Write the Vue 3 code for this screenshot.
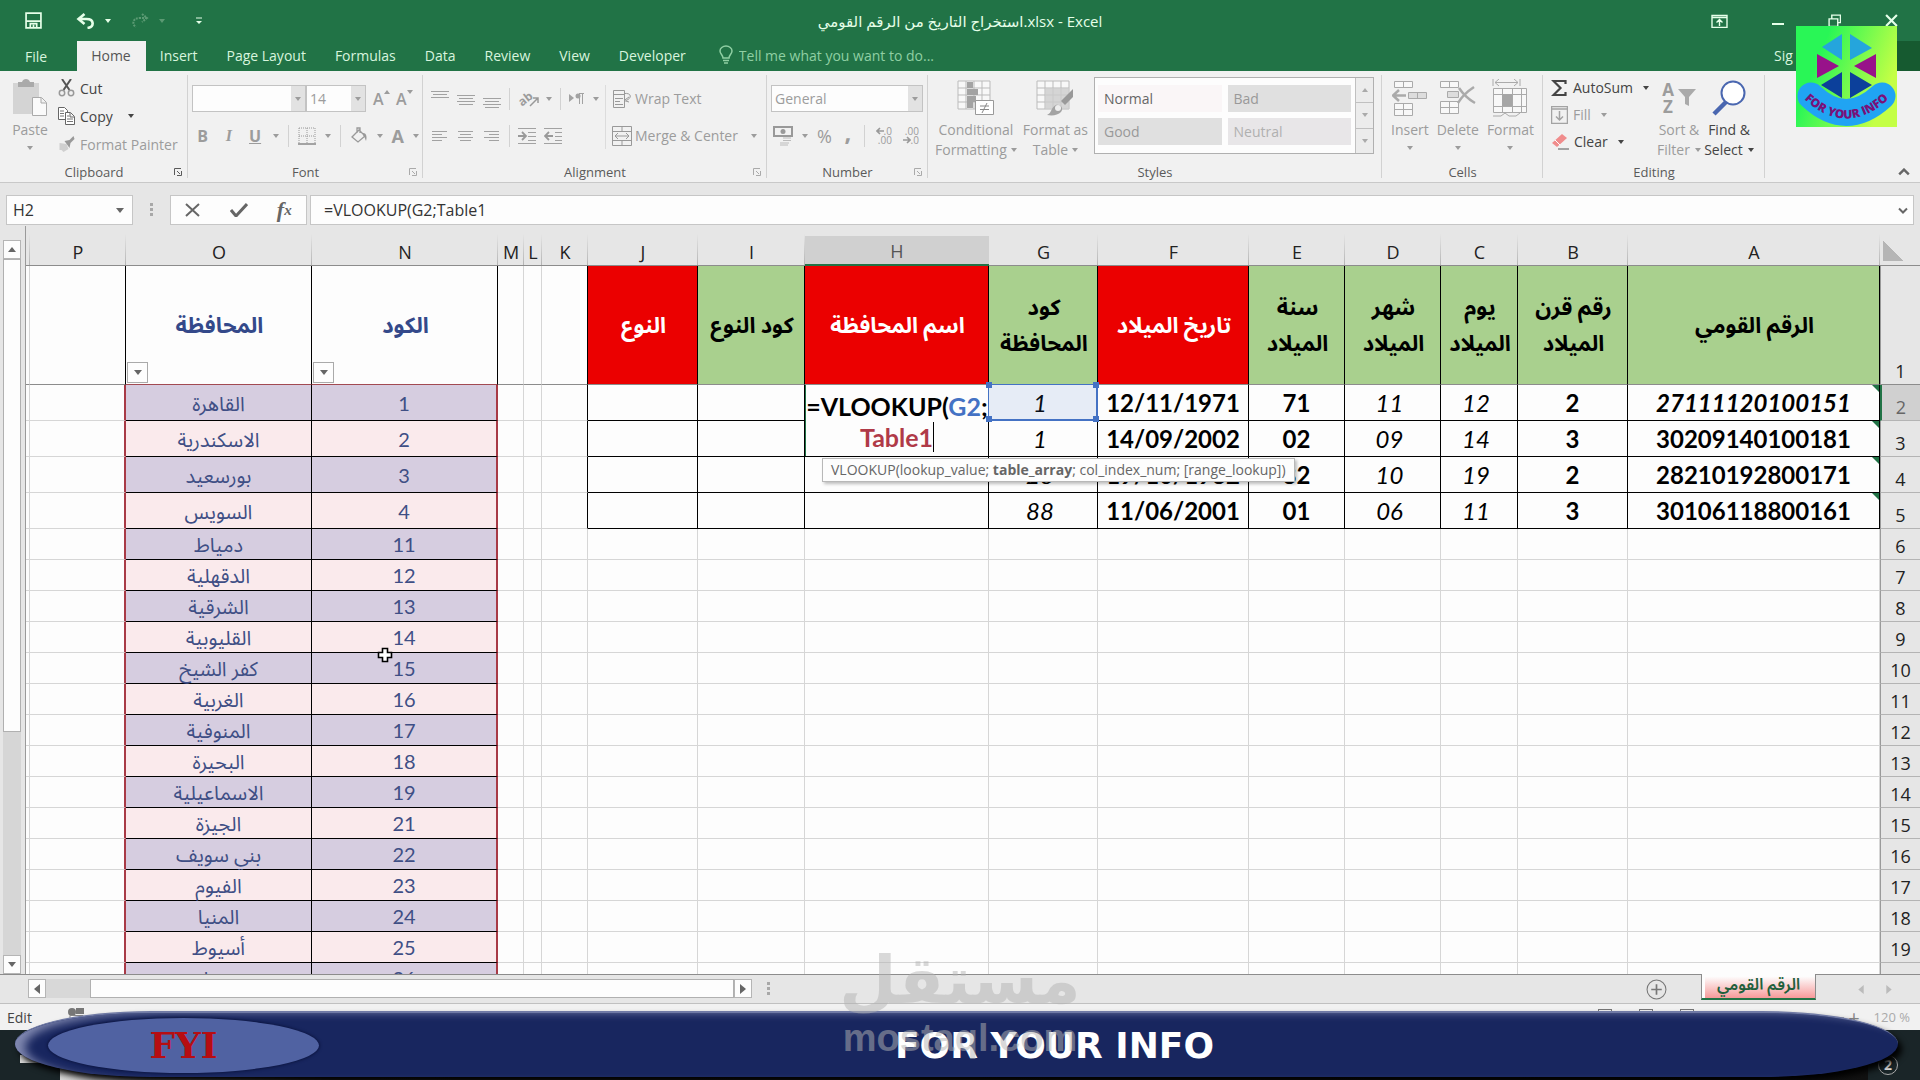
<template>
  <div class="excel">
    <!-- icon set -->
    <svg class="symbols" aria-hidden="true">
      <symbol id="save" viewBox="0 0 16 16"><path d="M1 1h14v14H1zM1 8.500h14M5 15v-4h6v4M8 12v3" fill="none" stroke="currentColor" stroke-width="1.600" /></symbol>
      <symbol id="undo" viewBox="0 0 18 16"><path d="M8 1L2 6l6 5M2 6h8c8 0 8 8 1 9" fill="none" stroke="currentColor" stroke-width="2.600" /></symbol>
      <symbol id="redo" viewBox="0 0 18 16"><path d="M11 1l5 4-5 4M16 5H9C1 5 1 12 5 14" fill="none" stroke="currentColor" stroke-width="2" stroke-dasharray="2 1" /></symbol>
      <symbol id="customize" viewBox="0 0 8 8"><path d="M1 1h6" stroke="currentColor" /><path d="M1 4h6L4 7z" fill="currentColor" /></symbol>
      <symbol id="display" viewBox="0 0 16 14"><path d="M.5 1.500h15v12H.5zM.5 3.500h15M8 12V6M5 8.500l3-3 3 3" fill="none" stroke="currentColor" stroke-width="1.400" /></symbol>
      <symbol id="minimize" viewBox="0 0 12 12"><path d="M0 9h12" stroke="currentColor" stroke-width="2" /></symbol>
      <symbol id="restore" viewBox="0 0 12 12"><path d="M1 4.500h8v7H1zM3.500 4V1h8v7H9" fill="none" stroke="currentColor" stroke-width="1.300" /></symbol>
      <symbol id="close" viewBox="0 0 12 12"><path d="M1 1l10 10M11 1L1 11" stroke="currentColor" stroke-width="2" /></symbol>
      <symbol id="bulb" viewBox="0 0 14 20"><path d="M4 13C4 10 1 9 1 6a6 5 0 0 1 12 0c0 3-3 4-3 7zM4 15.500h6M5 18h4" fill="none" stroke="currentColor" stroke-width="1.500" /></symbol>
      <symbol id="paste" viewBox="0 0 36 38"><path d="M1 4h26v31H1z" fill="#d4d4d4" /><path d="M6 8V3h4c1-4 7-4 8 0h4v5z" fill="#aaa" /><path d="M20.500 18.500h9l5 5v13h-14zM29 19v5h5" fill="#fafafa" stroke="#aaa" /></symbol>
      <symbol id="cut" viewBox="0 0 16 18"><path d="M3.500 0L11 11M12.500 0L5 11" stroke="#555" stroke-width="2" /><circle cx="3.500" cy="14" r="2.700" fill="none" stroke="#999" stroke-width="1.500" /><circle cx="12.500" cy="14" r="2.700" fill="none" stroke="#999" stroke-width="1.500" /></symbol>
      <symbol id="copy" viewBox="0 0 17 18"><path d="M.5 .5h6l3 3v9h-9z" fill="#fff" stroke="#666" /><path d="M7.500 5.500h5l4 4v8h-9zM12 6v4h4" fill="#fff" stroke="#666" /><path d="M2 4h4M2 6.500h4M2 9h4M9 9h2M9 12h6M9 14.500h6" stroke="#777" /></symbol>
      <symbol id="painter" viewBox="0 0 16 16"><path d="M1 7l7 1 2 5-5 3-2-2H1z" fill="#cfcfcf" /><path d="M6 5l5-1 4-4 1 3-4 4-1 5z" fill="#999" /></symbol>
      <symbol id="launcher" viewBox="0 0 8 8"><path d="M.5 7V.5H7M3 3l3 3M7.500 3v4.500H3" fill="none" stroke="currentColor" /></symbol>
      <symbol id="borders" viewBox="0 0 18 18"><path d="M1 1h16M1 1v15M17 1v15M9 1v15M1 9h16" fill="none" stroke="#999" stroke-dasharray="1 1" /><path d="M0 17h18" stroke="#888" stroke-width="1.500" /></symbol>
      <symbol id="bucket" viewBox="0 0 18 18"><path d="M2 10l7-7 6 6-7 6zM7 6V1h3v5" fill="none" stroke="#999" stroke-width="1.300" /><path d="M13 6c4 0 4 5 3 8-1-2-1-4-3-6z" fill="#999" /></symbol>
      <symbol id="al-top" viewBox="0 0 18 18"><path d="M0 1.500h18M2 4.500h14M0 7.500h18" stroke="#a2a2a2" /></symbol>
      <symbol id="al-mid" viewBox="0 0 18 18"><path d="M0 5.500h18M2 8.500h14M0 11.500h18M2 14.500h14" stroke="#a2a2a2" /></symbol>
      <symbol id="al-bot" viewBox="0 0 18 18"><path d="M0 8.500h18M2 11.500h14M0 14.500h18M2 17.500h14" stroke="#a2a2a2" /></symbol>
      <symbol id="al-left" viewBox="0 0 18 18"><path d="M1 4.500h15M1 7.500h10M1 10.500h15M1 13.500h10" stroke="#a2a2a2" /></symbol>
      <symbol id="al-center" viewBox="0 0 18 18"><path d="M1 4.500h15M3 7.500h11M1 10.500h15M3 13.500h11" stroke="#a2a2a2" /></symbol>
      <symbol id="al-right" viewBox="0 0 18 18"><path d="M1 4.500h15M6 7.500h10M1 10.500h15M6 13.500h10" stroke="#a2a2a2" /></symbol>
      <symbol id="indent-in" viewBox="0 0 18 18"><path d="M0 1.500h18M10 5.500h8M10 9.500h8M10 13.500h8M0 16.500h18" stroke="#a2a2a2" /><path d="M0 9h7M4 5l4 4-4 4" fill="none" stroke="#999" stroke-width="1.800" /></symbol>
      <symbol id="indent-out" viewBox="0 0 18 18"><path d="M0 1.500h18M11 5.500h7M11 9.500h7M11 13.500h7M0 16.500h18" stroke="#a2a2a2" /><path d="M9 9H1M5 5L1 9l4 4" fill="none" stroke="#999" stroke-width="1.800" /></symbol>
      <symbol id="rtl" viewBox="0 0 16 14"><path d="M0 2l5 4-5 4z" fill="#a2a2a2" /><path d="M15 1.500h-5M10.500 1v11M13.500 1v11" stroke="#a2a2a2" /><circle cx="9" cy="4" r="2.500" fill="#a2a2a2" /></symbol>
      <symbol id="wrap" viewBox="0 0 20 20"><path d="M1.500 1.500h11v17h-11zM1.500 5.500h11M3 9.500h8M3 12.500h5M3 15.500h8M12 4.500c8-1 8 5 2 7M17 8l-5 3.500 5 1.500" fill="none" stroke="#999" /></symbol>
      <symbol id="merge" viewBox="0 0 20 20"><path d="M.5 .5h19v19H.5zM.5 5.500h19M.5 14.500h19M10 .5v5M10 14.500v5M3 10h14M6 7l-3 3 3 3M14 7l3 3-3 3" fill="none" stroke="#999" /></symbol>
      <symbol id="money" viewBox="0 0 20 20"><path d="M1 1h18v9H1z" fill="none" stroke="#999" stroke-width="2" /><circle cx="10" cy="5.500" r="2.500" fill="#999" /><path d="M10 12h8M10 14.500h8M7 17h9M7 19h8" stroke="#bbb" /></symbol>
      <symbol id="arrow-l" viewBox="0 0 8 8"><path d="M8 4H1M4 1L1 4l3 3" fill="none" stroke="#999" stroke-width="1.600" /></symbol>
      <symbol id="arrow-r" viewBox="0 0 8 8"><path d="M0 4h7M4 1l3 3-3 3" fill="none" stroke="#999" stroke-width="1.600" /></symbol>
      <symbol id="cond" viewBox="0 0 38 36"><path d="M1 1h32v28H1zM1 8h32M1 15h32M1 22h32M9 1v28M17 1v28M25 1v28" fill="#f8f8f8" stroke="#bbb" /><path d="M10 2h6v6h-6zM10 9h11v6H10zM10 16h9v6h-9zM10 22h6v6h-6z" fill="#a3a3a3" /><path d="M18.500 20.500h18v14h-18z" fill="#fff" stroke="#999" /><path d="M23 26h9M23 29.500h9M30 23l-5 10" stroke="#888" /></symbol>
      <symbol id="fmt-table" viewBox="0 0 38 36"><path d="M1 1h32v28H1zM1 8h32M1 15h32M1 22h32M9 1v28M17 1v28M25 1v28" fill="#f8f8f8" stroke="#bbb" /><path d="M9 8h24v21H9z" fill="#ccc" opacity=".8" /><path d="M37 9v8l-8 8-4-4z" fill="#999" /><path d="M11 35c5-2 4-8 9-10 5-1 8 4 5 7-3 3-8 4-14 3z" fill="#a3a3a3" /><circle cx="22" cy="28" r="3" fill="#eee" /></symbol>
      <symbol id="ins" viewBox="0 0 36 36"><path d="M2.500 1.500h18v6h-18zM11.500 1.500v6M2.500 23.500h18v12h-18zM2.500 29.500h18M11.500 23.500v12" fill="#f8f8f8" stroke="#aaa" /><path d="M16.500 12.500h18v6h-18zM25.500 12.500v6" fill="#ddd" stroke="#aaa" /><path d="M14 15.500H2M7 10l-6 5.500 6 5.500" fill="none" stroke="#aaa" stroke-width="2.500" /></symbol>
      <symbol id="del" viewBox="0 0 36 36"><path d="M.5 1.500h18v6H.5zM9.500 1.500v6M.5 21.500h18v12H.5zM.5 27.500h18M9.500 21.500v12" fill="#f8f8f8" stroke="#aaa" /><path d="M7.500 11.500h11v6h-11z" fill="#ddd" stroke="#aaa" /><path d="M19 8c4 6 9 11 16 15M34 7c-6 4-12 9-16 16" fill="none" stroke="#aaa" stroke-width="2.500" /></symbol>
      <symbol id="fmt" viewBox="0 0 36 38"><path d="M1 0v7M28 0v7M3 3.500h23M7 0L3 3.500 7 7M22 0l4 3.500L22 7" fill="none" stroke="#aaa" /><path d="M1.500 9.500h33v24h-33zM1.500 15.500h33M1.500 27.500h33M10.500 9.500v24M20.500 9.500v24M29.500 9.500v24" fill="#f8f8f8" stroke="#aaa" /><path d="M10 15h10v12H10z" fill="#a6a6a6" /><path d="M1 37h8l4-3 4 3h7l4-3" fill="none" stroke="#aaa" /></symbol>
      <symbol id="sigma" viewBox="0 0 16 18"><path d="M14 5V2H2l7 7-7 7h12v-3" fill="none" stroke="#444" stroke-width="2.200" /></symbol>
      <symbol id="fill" viewBox="0 0 17 18"><path d="M.5 .5h16v17H.5zM.5 3h16M8.500 5v9M5 10.500l3.500 3.500 3.500-3.500" fill="none" stroke="#a3a3a3" stroke-width="1.500" /></symbol>
      <symbol id="eraser" viewBox="0 0 18 17"><path d="M1 10L11 1l5 4L6 14z" fill="#f08c8c" /><path d="M4 7l5 5" stroke="#fff" /><path d="M7 16h11" stroke="#555" /></symbol>
      <symbol id="funnel" viewBox="0 0 18 18"><path d="M0 0h18l-7 8v9l-4-2V8z" fill="#aaa" /></symbol>
      <symbol id="find" viewBox="0 0 34 36"><path d="M14 22L2 34" stroke="#4a67b0" stroke-width="4.500" /><circle cx="21" cy="13" r="11.500" fill="#fff" stroke="#4a67b0" stroke-width="2" /></symbol>
      <symbol id="up" viewBox="0 0 10 6"><path d="M1 5l4-4 4 4" fill="none" stroke="#666" stroke-width="2" /></symbol>
      <symbol id="down" viewBox="0 0 10 6"><path d="M1 1l4 4 4-4" fill="none" stroke="#666" stroke-width="2" /></symbol>
      <symbol id="check" viewBox="0 0 18 14"><path d="M1 7l5 6L17 1" fill="none" stroke="#666" stroke-width="3" /></symbol>
      <symbol id="cancel" viewBox="0 0 16 14"><path d="M1 1l13 12M14 1L1 13" stroke="#666" stroke-width="2" /></symbol>
      <symbol id="plus" viewBox="0 0 20 20"><circle cx="10" cy="10" r="9" fill="none" stroke="#777" /><path d="M10 5v10M5 10h10" stroke="#777" stroke-width="1.600" /></symbol>
      <symbol id="tri-left" viewBox="0 0 6 10"><path d="M6 0v10L0 5z" fill="currentColor" /></symbol>
      <symbol id="tri-right" viewBox="0 0 6 10"><path d="M0 0v10l6-5z" fill="currentColor" /></symbol>
    </svg>

    <header class="titlebar">
      <div class="quick">
        <button aria-label="Save"><svg width="17" height="17"><use href="#save" /></svg></button>
        <button aria-label="Undo"><svg width="19" height="16"><use href="#undo" /></svg><i class="caret"></i></button>
        <button class="dim" aria-label="Redo"><svg width="18" height="16"><use href="#redo" /></svg><i class="caret"></i></button>
        <button aria-label="Customize"><svg width="8" height="8"><use href="#customize" /></svg></button>
      </div>
      <h1>استخراج التاريخ من الرقم القومي.xlsx - Excel</h1>
      <div class="window-buttons">
        <button aria-label="Ribbon display"><svg width="17" height="14"><use href="#display" /></svg></button>
        <button aria-label="Minimize"><svg width="12" height="12"><use href="#minimize" /></svg></button>
        <button aria-label="Restore"><svg width="13" height="13"><use href="#restore" /></svg></button>
        <button aria-label="Close"><svg width="13" height="13"><use href="#close" /></svg></button>
      </div>
    </header>

    <nav class="tabs">
      <button class="tab file">File</button>
      <button v-for="tab in tabs" :key="tab" :class="['tab', { active: tab === activeTab }]" @click="activeTab = tab">{{ tab }}</button>
      <label class="tell"><svg width="14" height="20"><use href="#bulb" /></svg><input type="text" placeholder="Tell me what you want to do..." aria-label="Tell me" /></label>
      <button class="signin">Sig</button>
      <span class="share"></span>
    </nav>

    <section class="ribbon">
      <div class="group">
        <div class="body clipboard">
          <button class="big off"><svg width="36" height="38"><use href="#paste" /></svg><span>Paste</span><i class="caret"></i></button>
          <div class="stack">
            <button><svg width="17" height="18"><use href="#cut" /></svg>Cut</button>
            <button><svg width="17" height="18"><use href="#copy" /></svg>Copy<i class="caret gap"></i></button>
            <button class="off"><svg width="17" height="16"><use href="#painter" /></svg>Format Painter</button>
          </div>
        </div>
        <footer>Clipboard<svg class="launcher" width="8" height="8"><use href="#launcher" /></svg></footer>
      </div>

      <div class="group off">
        <div class="body font">
          <div class="line">
            <label class="combo name"><select aria-label="Font"><option></option></select><i class="caret"></i></label>
            <label class="combo size"><select aria-label="Font size"><option>14</option></select><i class="caret"></i></label>
            <button class="grow" aria-label="Increase font size">A<i class="caret flip"></i></button>
            <button class="grow" aria-label="Decrease font size">A<i class="caret"></i></button>
          </div>
          <div class="line tools">
            <button class="letter"><b>B</b></button>
            <button class="letter"><b class="it">I</b></button>
            <button class="letter"><b class="un">U</b></button>
            <i class="caret"></i><i class="sep"></i>
            <button aria-label="Borders"><svg width="18" height="18"><use href="#borders" /></svg></button>
            <i class="caret"></i><i class="sep"></i>
            <button aria-label="Fill colour"><svg width="18" height="18"><use href="#bucket" /></svg></button>
            <i class="caret"></i>
            <button class="color"><b>A</b></button>
            <i class="caret"></i>
          </div>
        </div>
        <footer>Font<svg class="launcher" width="8" height="8"><use href="#launcher" /></svg></footer>
      </div>

      <div class="group off">
        <div class="body align">
          <div class="align-left">
            <div class="line">
              <button v-for="name in ['al-top', 'al-mid', 'al-bot']" :key="name" :aria-label="name"><svg width="18" height="18"><use :href="'#' + name" /></svg></button>
              <i class="sep"></i>
              <button class="orient" aria-label="Orientation"><b>ab</b><svg width="10" height="10" viewBox="0 0 10 10"><path d="M1 9l8-8M4 1h5v5" fill="none" stroke="#999" stroke-width="1.500" /></svg></button><i class="caret"></i>
              <i class="sep"></i>
              <button aria-label="Text direction"><svg width="16" height="14"><use href="#rtl" /></svg></button><i class="caret"></i>
            </div>
            <div class="line">
              <button v-for="name in ['al-left', 'al-center', 'al-right']" :key="name" :aria-label="name"><svg width="18" height="18"><use :href="'#' + name" /></svg></button>
              <i class="sep"></i>
              <button aria-label="Decrease indent"><svg width="18" height="18"><use href="#indent-in" /></svg></button>
              <button aria-label="Increase indent"><svg width="18" height="18"><use href="#indent-out" /></svg></button>
            </div>
          </div>
          <div class="align-right">
            <button><svg width="20" height="20"><use href="#wrap" /></svg>Wrap Text</button>
            <button><svg width="20" height="20"><use href="#merge" /></svg>Merge &amp; Center<i class="caret gap"></i></button>
          </div>
        </div>
        <footer>Alignment<svg class="launcher" width="8" height="8"><use href="#launcher" /></svg></footer>
      </div>

      <div class="group off">
        <div class="body font">
          <div class="line">
            <label class="combo number"><select aria-label="Number format"><option>General</option></select><i class="caret"></i></label>
          </div>
          <div class="line numbers">
            <button aria-label="Accounting"><svg width="20" height="20"><use href="#money" /></svg></button><i class="caret"></i>
            <button class="pct">%</button>
            <button class="comma">,</button>
            <i class="sep"></i>
            <button class="decimal" aria-label="Increase decimal"><span><svg width="8" height="8"><use href="#arrow-l" /></svg>.0</span><span>.00</span></button>
            <button class="decimal" aria-label="Decrease decimal"><span>.00</span><span><svg width="8" height="8"><use href="#arrow-r" /></svg>.0</span></button>
          </div>
        </div>
        <footer>Number<svg class="launcher" width="8" height="8"><use href="#launcher" /></svg></footer>
      </div>

      <div class="group">
        <div class="body styles">
          <button class="big off"><svg width="38" height="38"><use href="#cond" /></svg><span>Conditional</span><span>Formatting<i class="caret gap"></i></span></button>
          <button class="big off"><svg width="38" height="38"><use href="#fmt-table" /></svg><span>Format as</span><span>Table<i class="caret gap"></i></span></button>
          <div class="gallery">
            <div class="swatches">
              <button class="normal">Normal</button><button class="bad">Bad</button>
              <button class="good">Good</button><button class="neutral">Neutral</button>
            </div>
            <div class="gallery-scroll">
              <button aria-label="Previous styles"><i class="caret flip"></i></button>
              <button aria-label="Next styles"><i class="caret"></i></button>
              <button aria-label="More styles"><i class="caret"></i></button>
            </div>
          </div>
        </div>
        <footer>Styles</footer>
      </div>

      <div class="group">
        <div class="body cells off">
          <button class="big"><svg width="36" height="38"><use href="#ins" /></svg><span>Insert</span><i class="caret"></i></button>
          <button class="big"><svg width="36" height="38"><use href="#del" /></svg><span>Delete</span><i class="caret"></i></button>
          <button class="big"><svg width="36" height="38"><use href="#fmt" /></svg><span>Format</span><i class="caret"></i></button>
        </div>
        <footer>Cells</footer>
      </div>

      <div class="group">
        <div class="body editing">
          <div class="stack">
            <button><svg width="17" height="18"><use href="#sigma" /></svg>AutoSum<i class="caret gap"></i></button>
            <button class="off"><svg width="17" height="18"><use href="#fill" /></svg>Fill<i class="caret"></i></button>
            <button><svg width="18" height="17"><use href="#eraser" /></svg>Clear<i class="caret"></i></button>
          </div>
          <button class="big off">
            <span class="sort-icon"><span class="az"><b>A</b><b>Z</b></span><svg width="18" height="18"><use href="#funnel" /></svg></span>
            <span>Sort &amp;</span><span>Filter<i class="caret"></i></span>
          </button>
          <button class="big"><svg width="34" height="38"><use href="#find" /></svg><span>Find &amp;</span><span>Select<i class="caret"></i></span></button>
        </div>
        <footer>Editing</footer>
      </div>

      <button class="collapse" aria-label="Collapse the ribbon"><svg width="12" height="8"><use href="#up" /></svg></button>
    </section>

    <section class="formula">
      <label class="namebox"><input type="text" value="H2" aria-label="Name box" /><i class="caret dark"></i></label>
      <span class="dots"></span>
      <div class="fx">
        <button aria-label="Cancel"><svg width="16" height="14"><use href="#cancel" /></svg></button>
        <button aria-label="Enter"><svg width="18" height="14"><use href="#check" /></svg></button>
        <button class="fn" aria-label="Insert function">f<sub>x</sub></button>
      </div>
      <label class="formulabox"><input type="text" value="=VLOOKUP(G2;Table1" aria-label="Formula bar" /><svg width="10" height="7"><use href="#down" /></svg></label>
    </section>

    <main class="sheet">
      <div class="vscroll">
        <button aria-label="Scroll up"><i class="caret dark flip"></i></button>
        <div class="vtrack"><div class="vthumb"></div></div>
        <button aria-label="Scroll down"><i class="caret dark"></i></button>
      </div>
      <div class="grid">
        <table>
          <colgroup>
            <col v-for="c in columns" :key="c.id" :style="{ width: c.width + 'px' }" />
            <col class="rownum-col" />
          </colgroup>
          <thead>
            <tr>
              <th v-for="c in columns" :key="c.id" :class="{ current: c.id === 'H' }">{{ c.id === 'Q' ? '' : c.id }}</th>
              <th class="corner"></th>
            </tr>
          </thead>
          <tbody>
            <tr v-for="r in 20" :key="r" :class="rowClass(r)">
              <td v-for="c in columns" :key="c.id" :class="cellClass(r, c.id)" :dir="r === 1 ? 'rtl' : 'ltr'">{{ cellText(r, c.id) }}
                <button v-if="r === 1 && (c.id === 'N' || c.id === 'O')" class="filter" aria-label="Filter"><i class="caret dark"></i></button>
                <div v-if="r === 2 && c.id === 'H'" class="editor">=VLOOKUP(<span class="ref">G2</span>;<br /><span class="tbl">Table1</span></div>
                <div v-if="r === 2 && c.id === 'H'" class="hint">VLOOKUP(lookup_value; <b>table_array</b>; col_index_num; [range_lookup])</div>
                <div v-if="r === 2 && c.id === 'G'" class="range"><i></i><i></i><i></i><i></i></div>
              </td>
              <th>{{ r }}</th>
            </tr>
          </tbody>
        </table>
        <svg class="cursor" viewBox="0 0 16 16"><path d="M5.500 1.500h5v4h4v5h-4v4h-5v-4h-4v-5h4z" fill="#fff" stroke="#000" stroke-width="1.600" /></svg>
      </div>
    </main>

    <div class="bottom">
      <div class="hscroll">
        <button aria-label="Scroll left"><svg width="6" height="10"><use href="#tri-left" /></svg></button>
        <div class="htrack"><div class="hthumb"></div></div>
        <button aria-label="Scroll right"><svg width="6" height="10"><use href="#tri-right" /></svg></button>
      </div>
      <span class="dots"></span>
      <button class="add" aria-label="New sheet"><svg width="21" height="21"><use href="#plus" /></svg></button>
      <button class="sheet-tab">الرقم القومي</button>
      <div class="sheet-nav"><svg width="6" height="9"><use href="#tri-left" /></svg><svg width="6" height="9"><use href="#tri-right" /></svg></div>
    </div>

    <div class="status">
      <span>Edit</span>
      <svg class="macro" viewBox="0 0 16 12"><circle cx="4" cy="4" r="4" fill="#777" /><path d="M8 0h8v6H8z" fill="#777" /><path d="M2 7.500h13v4H2z" fill="#fff" stroke="#888" /></svg>
      <div class="views"><i></i><i></i><i></i></div>
      <span class="zoom"><i></i>+</span>
      <span class="percent">120 %</span>
    </div>
    <div class="taskbar"><span class="start"></span><span class="search"></span><span class="notice">2</span></div>

    <div class="banner">
      <div class="oval">FYI</div>
      <div class="slogan">FOR YOUR INFO</div>
    </div>

    <div class="watermark"><span class="mark-ar">مستقل</span><span class="mark-en">mostaql.com</span></div>

    <svg class="logo" viewBox="0 0 101 101">
      <defs>
        <linearGradient id="lg" x1="0" y1="0" x2="1" y2=".4"><stop offset=".3" stop-color="#29f656" /><stop offset="1" stop-color="#c4ff45" /></linearGradient>
        <path id="arc" d="M7 72Q50 113 94 72" />
      </defs>
      <path d="M0 0h101v101H0z" fill="url(#lg)" />
      <path d="M26 21L46 8v26zM54 8l22 14-22 12z" fill="#25a5dc" />
      <path d="M21 28v24l22-12zM80 28v24L58 40z" fill="#98128a" />
      <path d="M25 59l21-13v26zM54 46l22 13-22 13z" fill="#0c409b" />
      <path d="M15 70Q50 103 86 70" fill="none" stroke="#20a4f3" stroke-width="27" stroke-linecap="round" />
      <text class="logo-text"><textPath href="#arc" startOffset="50%">FOR YOUR INFO</textPath></text>
    </svg>
  </div>
</template>

<script setup>
import { ref } from 'vue';

const tabs = ['Home', 'Insert', 'Page Layout', 'Formulas', 'Data', 'Review', 'View', 'Developer'];
const activeTab = ref('Home');

// the sheet runs right to left, so columns are listed from the far end
const columns = [
  { id: 'Q', width: 4 },
  { id: 'P', width: 96 },
  { id: 'O', width: 186 },
  { id: 'N', width: 186 },
  { id: 'M', width: 26 },
  { id: 'L', width: 18 },
  { id: 'K', width: 46 },
  { id: 'J', width: 110 },
  { id: 'I', width: 107 },
  { id: 'H', width: 184 },
  { id: 'G', width: 109 },
  { id: 'F', width: 151 },
  { id: 'E', width: 96 },
  { id: 'D', width: 96 },
  { id: 'C', width: 77 },
  { id: 'B', width: 110 },
  { id: 'A', width: 252 }
];

const headers = {
  O: 'المحافظة',
  N: 'الكود',
  J: 'النوع',
  I: 'كود النوع',
  H: 'اسم المحافظة',
  G: 'كود\nالمحافظة',
  F: 'تاريخ الميلاد',
  E: 'سنة\nالميلاد',
  D: 'شهر\nالميلاد',
  C: 'يوم\nالميلاد',
  B: 'رقم قرن\nالميلاد',
  A: 'الرقم القومي'
};

const people = [
  { A: '27111120100151', B: '2', C: '12', D: '11', E: '71', F: '12/11/1971', G: '1' },
  { A: '30209140100181', B: '3', C: '14', D: '09', E: '02', F: '14/09/2002', G: '1' },
  { A: '28210192800171', B: '2', C: '19', D: '10', E: '82', F: '19/10/1982', G: '28' },
  { A: '30106118800161', B: '3', C: '11', D: '06', E: '01', F: '11/06/2001', G: '88' }
];

const cities = [
  [1, 'القاهرة'], [2, 'الاسكندرية'], [3, 'بورسعيد'], [4, 'السويس'],
  [11, 'دمياط'], [12, 'الدقهلية'], [13, 'الشرقية'], [14, 'القليوبية'],
  [15, 'كفر الشيخ'], [16, 'الغربية'], [17, 'المنوفية'], [18, 'البحيرة'],
  [19, 'الاسماعيلية'], [21, 'الجيزة'], [22, 'بني سويف'], [23, 'الفيوم'],
  [24, 'المنيا'], [25, 'أسيوط'], [26, 'سوهاج']
];

const cellText = (r, c) => {
  if (r === 1) return headers[c] || '';
  if (c === 'N') return cities[r - 2][0];
  if (c === 'O') return cities[r - 2][1];
  return (r < 6 && people[r - 2][c]) || '';
};

const cellClass = (r, c) => {
  const inMain = c >= 'A' && c <= 'J';
  return {
    main: inMain && r < 6,
    edge: c === 'K' && r < 6,
    red: r === 1 && 'JHF'.includes(c),
    green: r === 1 && inMain && !'JHF'.includes(c),
    lookup: c === 'N' || c === 'O',
    'lookup-edge': c === 'P',
    band: (c === 'N' || c === 'O') && r > 1 && r % 2 === 0,
    pink: (c === 'N' || c === 'O') && r > 1 && r % 2 === 1,
    last: c === 'N',
    bold: inMain && 'ABEF'.includes(c),
    italic: r > 1 && 'CDG'.includes(c),
    slanted: c === 'A' && r === 2,
    flag: c === 'A' && r > 1 && r < 6
  };
};

const rowClass = (r) => ({ head: r === 1, tall: r > 1 && r < 6, current: r === 2 });
</script>

<style>
body {
  overflow: hidden;
}
</style>

<style scoped>
* {
  box-sizing: border-box;
}

.excel {
  position: relative;
  display: flex;
  flex-direction: column;
  height: 100vh;
  background: #e6e6e6;
  color: #444;
  font-family: 'Open Sans', 'Noto Sans', 'DejaVu Sans', sans-serif;
  font-size: 14px;
}

.symbols {
  position: absolute;
  width: 0;
  height: 0;
}

button,
input,
select {
  border: 0;
  padding: 0;
  margin: 0;
  background: none;
  color: inherit;
  font: inherit;
}

button {
  display: flex;
  align-items: center;
  white-space: nowrap;
}

svg {
  flex: none;
}

.caret {
  flex: none;
  width: 0;
  height: 0;
  border: 3px solid transparent;
  border-top: 4px solid currentColor;
  border-bottom: 0;
}

.caret.gap {
  margin-left: 10px;
}

.caret.dark {
  border-width: 4px;
  border-top: 5px solid #666;
  border-bottom: 0;
}

.flip {
  transform: rotate(180deg);
}

.off {
  color: #9c9c9c;
}

/* title bar and tabs */
.titlebar {
  display: grid;
  grid-template-columns: 1fr auto 1fr;
  align-items: center;
  height: 41px;
  background: #217346;
  color: #e6ffe9;
}

.titlebar h1 {
  margin: 0;
  font-size: 15px;
  font-weight: 400;
}

.quick {
  display: flex;
  align-items: center;
  padding-left: 25px;
}

.quick button {
  gap: 10px;
  margin-right: 34px;
}

.quick button:nth-child(2) {
  margin-right: 20px;
}

.quick .dim {
  margin-right: 30px;
  color: #5b9a73;
}

.window-buttons {
  display: flex;
  justify-content: flex-end;
  align-items: center;
  gap: 44px;
  padding-right: 22px;
}

.tabs {
  display: flex;
  height: 30px;
  background: #217346;
  color: #d8f5de;
}

.tab {
  padding: 0 15px 2px 14px;
}

.tab.file {
  padding: 0 30px 0 25px;
}

.tab.active {
  background: #f1f1f1;
  color: #555;
}

.tell {
  display: flex;
  flex: 1;
  align-items: center;
  gap: 6px;
  margin-left: 18px;
  padding-bottom: 2px;
  color: #8fcfa3;
}

.tell input {
  flex: 1;
}

.tell input::placeholder {
  color: #8fcfa3;
}

.signin {
  width: 123px;
  padding-bottom: 2px;
}

.share {
  width: 23px;
  background: #165a30;
}

/* ribbon */
.ribbon {
  display: grid;
  grid-template-columns: 188px 235px 344px 161px 454px 161px 222px 1fr;
  height: 112px;
  background: #f1f1f1;
  border-bottom: 1px solid #c8c8c8;
}

.group {
  position: relative;
  display: flex;
  flex-direction: column;
  padding-top: 3px;
}

.group::after {
  content: '';
  position: absolute;
  top: 4px;
  right: 0;
  bottom: 4px;
  border-right: 1px solid #d2d2d2;
}

.group footer {
  position: relative;
  height: 22px;
  color: #5a5a5a;
  font-size: 13px;
  line-height: 24px;
  text-align: center;
}

.launcher {
  position: absolute;
  right: 6px;
  bottom: 6px;
}

.off .launcher {
  color: #aaa;
}

.body {
  display: flex;
  flex: 1;
}

.big {
  flex-direction: column;
  align-items: center;
  padding-top: 5px;
  line-height: 20px;
}

.big span {
  display: flex;
  align-items: center;
}

.big > svg {
  margin-bottom: 3px;
}

.big > .caret {
  margin-top: 6px;
}

.big .caret.gap {
  margin-left: 4px;
}

.stack {
  display: flex;
  flex-direction: column;
}

.stack button {
  gap: 5px;
  height: 28px;
}

.clipboard {
  gap: 10px;
  padding-left: 12px;
}

.font {
  flex-direction: column;
  gap: 10px;
  padding: 11px 4px 0;
}

.line {
  display: flex;
  align-items: center;
  height: 27px;
}

.combo {
  display: flex;
  flex: none;
  align-items: center;
  height: 27px;
  border: 1px solid #c3c3c3;
  background: linear-gradient(90deg, #fdfdfd calc(100% - 14px), #e2e2e2 0);
}

.combo select {
  flex: 1;
  min-width: 0;
  padding-left: 3px;
  appearance: none;
}

.combo .caret {
  margin-right: 4px;
}

.combo.name {
  width: 114px;
}

.combo.size {
  width: 60px;
  margin-right: 7px;
}

.combo.number {
  width: 152px;
}

.grow {
  width: 23px;
  font-size: 16px;
  font-weight: 600;
}

.grow .caret {
  margin-bottom: 14px;
}

.sep {
  width: 1px;
  height: 22px;
  background: #d2d2d2;
}

.tools {
  gap: 9px;
  padding-left: 2px;
}

.letter {
  justify-content: center;
  width: 18px;
  font-size: 16px;
}

.letter .it {
  font-family: 'Liberation Serif', serif;
  font-style: italic;
}

.letter .un {
  text-decoration: underline;
}

.color {
  font-size: 18px;
}

.align {
  padding: 11px 0 0 8px;
}

.align-left {
  display: flex;
  flex-direction: column;
  gap: 10px;
  width: 175px;
  height: 64px;
  border-right: 1px solid #dcdcdc;
}

.align-left .line {
  gap: 8px;
}

.orient {
  width: 20px;
}

.orient b {
  font-size: 12px;
  line-height: 12px;
  transform: rotate(-38deg);
}

.orient svg {
  margin: 6px 0 0 -4px;
}

.align-right {
  display: flex;
  flex-direction: column;
  gap: 10px;
  padding-left: 6px;
}

.align-right button {
  gap: 3px;
  height: 27px;
}

.numbers {
  gap: 9px;
  padding-left: 2px;
}

.pct {
  font-size: 18px;
}

.comma {
  justify-content: center;
  width: 14px;
  height: 27px;
  padding-bottom: 8px;
  font-size: 24px;
  font-weight: 700;
}

.decimal {
  flex-direction: column;
  align-items: flex-end;
  width: 18px;
  font-size: 10px;
  line-height: 9px;
}

.decimal span {
  display: flex;
  align-items: center;
}

.styles {
  gap: 6px;
  padding-left: 7px;
}

.gallery {
  display: flex;
  flex: 1;
  height: 77px;
  margin: 3px 8px 0 0;
  border: 1px solid #b0b0b0;
  background: #fdfdfd;
}

.swatches {
  display: grid;
  flex: 1;
  grid-template-columns: 1fr 1fr;
  grid-template-rows: 27px 27px;
  gap: 6px;
  padding: 7px 4px 0 3px;
}

.swatches button {
  padding-left: 6px;
}

.normal {
  background: #faf6f7;
  color: #666;
}

.bad,
.good {
  background: #e0e0e0;
  color: #999;
}

.neutral {
  background: #e8e6e8;
  color: #b0b0b0;
}

.gallery-scroll {
  display: grid;
  width: 18px;
  border-left: 1px solid #c0c0c0;
  background: #ececec;
  color: #aaa;
}

.gallery-scroll button {
  justify-content: center;
}

.gallery-scroll button + button {
  border-top: 1px solid #c0c0c0;
}

.cells {
  justify-content: space-between;
  padding: 0 9px 0 9px;
}

.editing {
  padding: 0 6px 0 8px;
}

.editing .stack {
  width: 103px;
}

.editing .stack button {
  height: 27px;
}

.editing .caret {
  margin-left: 5px;
}

.editing .big {
  width: 50px;
}

.big .sort-icon {
  gap: 4px;
  height: 38px;
  margin-bottom: 3px;
}

.big .az {
  flex-direction: column;
  font-size: 17px;
  line-height: 17px;
}

.collapse {
  align-self: end;
  justify-self: end;
  margin: 0 10px 6px 0;
}

/* formula bar */
.formula {
  display: flex;
  height: 43px;
  padding: 12px 6px 1px;
  color: #333;
  font-size: 16px;
}

.namebox,
.fx,
.formulabox {
  display: flex;
  align-items: center;
  border: 1px solid #c6c6c6;
  background: #fdfdfd;
}

.namebox {
  width: 127px;
  padding: 0 8px 0 6px;
}

.namebox input,
.formulabox input {
  flex: 1;
  min-width: 0;
}

.dots {
  align-self: center;
  width: 3px;
  height: 14px;
  margin: 0 17px;
  background: repeating-linear-gradient(#a8a8a8 0 3px, transparent 3px 5px);
}

.fx {
  justify-content: space-around;
  width: 137px;
  margin-right: 3px;
}

.fn {
  color: #666;
  font-family: 'Liberation Serif', serif;
  font-size: 22px;
  font-style: italic;
  font-weight: 700;
  line-height: 20px;
}

.fn sub {
  font-size: 15px;
}

.formulabox {
  flex: 1;
  padding: 0 5px 0 13px;
}

/* sheet */
.sheet {
  display: flex;
  flex: 1;
  min-height: 0;
  overflow: hidden;
  border-bottom: 1px solid #8c8c8c;
}

.vscroll {
  display: flex;
  flex-direction: column;
  width: 25px;
  padding: 14px 4px 0 3px;
}

.vscroll button {
  justify-content: center;
  height: 19px;
  border: 1px solid #b5b5b5;
  background: #fdfdfd;
}

.vtrack {
  flex: 1;
  background: #d6d6d6;
}

.vthumb {
  height: 68%;
  border: 1px solid #b0b0b0;
  background: #fdfdfd;
}

.grid {
  position: relative;
  flex: 1;
  min-width: 0;
  border-left: 1px solid #9a9a9a;
}

table {
  width: 100%;
  table-layout: fixed;
  border-spacing: 0;
}

.rownum-col {
  width: 40px;
}

th {
  padding: 0;
  background: #e6e6e6;
  color: #222;
  font-size: 18px;
  font-weight: 400;
  line-height: 24px;
}

thead th {
  height: 40px;
  padding-top: 12px;
  border-bottom: 1px solid #8c8c8c;
  background: linear-gradient(#e6e6e6 20%, #b4b4b4) right / 1px 100% no-repeat #e6e6e6;
}

thead th.current {
  border-bottom: 2px solid #217346;
  background: linear-gradient(#e6e6e6 10px, #d0d0d0 10px);
  color: #555;
}

thead th.corner {
  background: linear-gradient(to top right, #b5b5b5 50%, transparent 50%) 3px 14px / 20px 21px no-repeat #e6e6e6;
}

tbody tr {
  height: 31px;
}

tbody tr.tall {
  height: 36px;
}

tbody tr.head {
  height: 119px;
}

tbody th {
  padding-bottom: 1px;
  border-bottom: 1px solid #b4b4b4;
  border-left: 1px solid #9a9a9a;
  vertical-align: bottom;
}

tbody tr.current th {
  border-left: 2px solid #217346;
  background: #d0d0d0;
  color: #666;
}

td {
  position: relative;
  padding: 0;
  border-right: 1px solid #d6d6d6;
  border-bottom: 1px solid #d6d6d6;
  background: #fdfdfd;
  color: #000;
  font-family: Lato, 'Noto Sans Arabic', 'DejaVu Sans', sans-serif;
  font-size: 24px;
  line-height: 28px;
  text-align: center;
  white-space: nowrap;
}

.main {
  border-color: #000;
}

.edge {
  border-right-color: #000;
}

.head td,
.head th {
  border-bottom-color: #8c8c8c;
}

.head td {
  font-size: 22px;
  font-weight: 700;
  line-height: 36px;
  white-space: pre-line;
}

.red {
  background: #eb0000;
  color: #fff;
}

.green {
  background: #a9d08e;
}

.bold {
  font-weight: 700;
}

.italic {
  padding-right: 6px;
  font-style: italic;
}

.slanted {
  font-style: italic;
}

.lookup {
  border-color: #000;
  color: #3f4f85;
  font-size: 20px;
  line-height: 24px;
}

.head .lookup {
  border-bottom-color: #a24a52;
  color: #34498a;
}

.band {
  background: #d6cde0;
}

.pink {
  background: #faeaec;
}

.lookup-edge,
.last {
  border-right: 2px solid #a83a46;
}

.head .lookup-edge,
.head .last {
  border-right: 1px solid #000;
}

.flag::after {
  content: '';
  position: absolute;
  top: 0;
  right: 0;
  border-top: 7px solid #217346;
  border-left: 7px solid transparent;
}

.filter {
  position: absolute;
  left: 0;
  bottom: 1px;
  justify-content: center;
  width: 21px;
  height: 21px;
  border: 1px solid #aaa;
  background: #fdfdfd;
}

.editor {
  position: absolute;
  z-index: 2;
  top: 0;
  right: 0;
  left: 0;
  height: 71px;
  padding-top: 6px;
  border-left: 1px solid #217346;
  background: #fdfdfd;
  font-size: 25px;
  font-weight: 700;
  line-height: 31px;
}

.ref {
  color: #4472c4;
}

.tbl {
  border-right: 1px solid #000;
  color: #b03a48;
}

.hint {
  position: absolute;
  z-index: 3;
  top: 73px;
  left: 17px;
  padding: 0 8px;
  border: 1px solid #b8b8b8;
  background: #fdfdfd;
  box-shadow: 2px 2px 3px rgba(0, 0, 0, 0.25);
  color: #666;
  font-family: 'Open Sans', sans-serif;
  font-size: 14px;
  line-height: 22px;
}

.range {
  position: absolute;
  z-index: 2;
  inset: -1px;
  border: 2px solid #4472c4;
  border-top-width: 1px;
  border-left-width: 1px;
  background: rgba(68, 114, 196, 0.12);
}

.range i {
  position: absolute;
  width: 6px;
  height: 6px;
  background: #4472c4;
}

.range i:nth-child(odd) {
  left: -3px;
}

.range i:nth-child(even) {
  right: -3px;
}

.range i:nth-child(-n + 2) {
  top: -3px;
}

.range i:nth-child(n + 3) {
  bottom: -3px;
}

.cursor {
  position: absolute;
  top: 421px;
  left: 351px;
  width: 16px;
  height: 16px;
}

/* sheet tabs and scroll bar */
.bottom {
  display: flex;
  height: 29px;
  border-bottom: 1px solid #c0c0c0;
}

.hscroll {
  display: flex;
  width: calc(38% - 6px);
  height: 19px;
  margin: 4px 0 0 28px;
}

.hscroll button {
  justify-content: center;
  width: 18px;
  border: 1px solid #b5b5b5;
  background: #fdfdfd;
  color: #666;
}

.htrack {
  flex: 1;
  padding-left: 44px;
  background: #d8d8d8;
}

.hthumb {
  height: 100%;
  border: 1px solid #b0b0b0;
  background: #fdfdfd;
}

.bottom .dots {
  margin: 0 15px;
}

.add {
  margin: 0 34px 0 auto;
}

.sheet-tab {
  justify-content: center;
  width: 115px;
  height: 26px;
  margin-top: -1px;
  padding-bottom: 2px;
  border: 1px solid #8c8c8c;
  border-top: 0;
  border-bottom: 2px solid #217346;
  background: linear-gradient(#fdfdfd 10%, #f79a9a);
  box-shadow: inset 3px 0 #fdfdfd;
  color: #21603c;
  font-family: Lato, 'Noto Sans Arabic', 'DejaVu Sans', sans-serif;
  font-size: 16px;
  font-weight: 600;
}

.sheet-nav {
  display: flex;
  align-items: center;
  gap: 22px;
  width: 104px;
  padding-left: 42px;
  color: #bbb;
}

/* status and task bars */
.status {
  display: flex;
  align-items: center;
  height: 26px;
  padding: 0 10px 0 7px;
  background: #f1f1f1;
}

.macro {
  width: 16px;
  height: 12px;
  margin: 0 auto 6px 36px;
}

.views {
  display: flex;
  align-self: flex-start;
  gap: 27px;
  margin: 5px 130px 0 0;
}

.views i {
  width: 14px;
  height: 10px;
  border: 1px solid #777;
}

.zoom {
  display: flex;
  align-items: center;
  margin-right: 14px;
  color: #888;
  font-size: 20px;
}

.zoom i {
  width: 20px;
  margin-right: 4px;
  border-top: 1px solid #aaa;
}

.percent {
  color: #aaa;
  font-size: 13px;
}

.taskbar {
  display: flex;
  justify-content: space-between;
  height: 50px;
  background: #1a2528;
}

.start {
  width: 20px;
  height: 8px;
  margin: 25px 20px 0;
  background: #ddd;
}

.search {
  flex: 1;
  background: linear-gradient(90deg, #d8d8d8, #333 15%, #111);
}

.notice {
  align-self: flex-end;
  width: 20px;
  height: 20px;
  margin: 0 22px 5px 10px;
  border: 1px solid #aaa;
  border-radius: 50%;
  color: #ddd;
  font-weight: 700;
  line-height: 18px;
  text-align: center;
}

.banner {
  position: absolute;
  right: 22px;
  bottom: 3px;
  left: 15px;
  display: flex;
  align-items: center;
  height: 66px;
  border-top: 2px solid #707aa5;
  border-radius: 136px / 33px;
  background: #18265f;
  box-shadow: inset 14px 3px 10px -4px #8088b0, 4px 5px 6px #000;
}

.oval {
  display: flex;
  align-items: center;
  justify-content: center;
  width: 271px;
  height: 55px;
  margin-left: 33px;
  border-radius: 50%;
  background: #5062a2;
  box-shadow: 0 0 3px 1px #0c1540;
  color: #b60d12;
  font-family: 'DejaVu Serif', serif;
  font-size: 36px;
  font-weight: 700;
}

.slogan {
  flex: 1;
  padding-right: 108px;
  color: #fff;
  font-family: 'DejaVu Sans', sans-serif;
  font-size: 36px;
  font-weight: 700;
  text-align: center;
}

.watermark {
  position: absolute;
  right: 0;
  bottom: 20px;
  left: 0;
  display: flex;
  flex-direction: column;
  align-items: center;
  color: #b4b4b4;
  opacity: 0.5;
  font-family: 'Liberation Sans', 'DejaVu Sans', sans-serif;
  font-size: 38px;
  font-weight: 700;
  line-height: 44px;
  pointer-events: none;
}

.mark-ar {
  font-size: 66px;
  line-height: 72px;
}

.logo {
  position: absolute;
  top: 26px;
  right: 23px;
  width: 101px;
  height: 101px;
}

.logo-text {
  fill: #7a1078;
  font-family: 'Open Sans', sans-serif;
  font-size: 12px;
  font-weight: 800;
  text-anchor: middle;
}
</style>
